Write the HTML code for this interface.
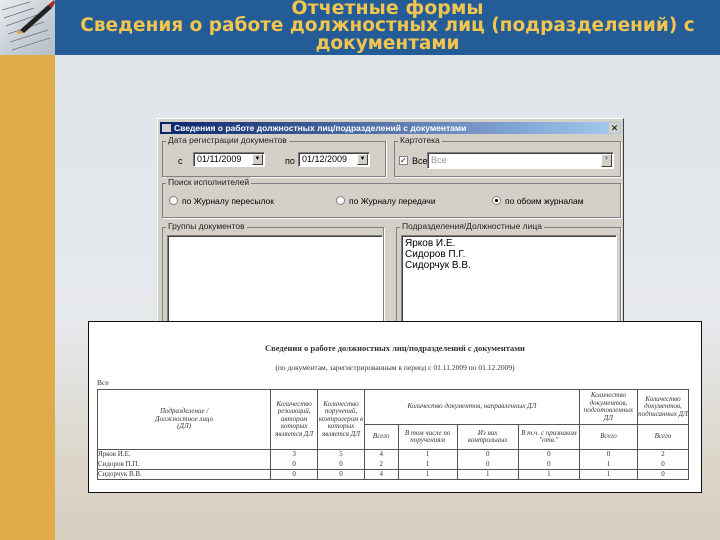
<!DOCTYPE html>
<html><head><meta charset="utf-8"><style>
*{margin:0;padding:0;box-sizing:border-box}
body{width:720px;height:540px;position:relative;overflow:hidden;font-family:"Liberation Sans","DejaVu Sans",sans-serif;
background:linear-gradient(180deg,#dfe4ea 0%,#e6e9ec 60%,#dcd6ca 85%,#d6cfc0 100%)}
.hdr{position:absolute;left:0;top:0;width:720px;height:55px;background:#245c98}
.pic{position:absolute;left:0;top:0;width:55px;height:55px;background:linear-gradient(135deg,#e8ecef 0%,#c9d0d6 50%,#b6bec6 100%);overflow:hidden}
.strip{position:absolute;left:0;top:55px;width:55px;height:485px;background:#e2ab4a}
.t1,.t2{position:absolute;left:55px;width:665px;text-align:center;color:#f2c54e;font-weight:bold;font-family:"DejaVu Sans",sans-serif;white-space:nowrap}
.t1{top:-3px;font-size:19px;line-height:22px}
.t2{top:17px;font-size:18.5px;line-height:18px}
.dlg{position:absolute;left:157px;top:118px;width:467px;height:205px;background:#d4d0c8;border:1px solid #fff;border-right-color:#404040;font-size:9px;color:#000}
.tb{position:absolute;left:2px;top:3px;width:461px;height:12px;background:linear-gradient(90deg,#0a246a,#a6caf0);color:#fff;font-weight:bold;font-size:8.5px;line-height:12px;padding-left:14px}
.tb:before{content:"";position:absolute;left:2px;top:2px;width:9px;height:8px;background:#d4d0c8}
.x{position:absolute;right:1px;top:1px;width:11px;height:10px;background:#d4d0c8;color:#000;font-size:9px;line-height:10px;text-align:center;padding:0}
.gb{position:absolute;border:1px solid #808080;box-shadow:1px 1px 0 #fff}
.gl{position:absolute;top:-7px;left:3px;background:#d4d0c8;padding:0 2px;font-size:8.5px;color:#222}
.in{position:absolute;background:#fff;border:1px solid #808080;border-right-color:#fff;border-bottom-color:#fff;box-shadow:inset 1px 1px 0 #404040}
.dd{position:absolute;right:1px;top:1px;width:11px;height:11px;background:#d4d0c8;border:1px solid #fff;border-right-color:#404040;border-bottom-color:#404040;font-size:6px;text-align:center;line-height:9px}
.rad{position:absolute;font-size:8.5px;white-space:nowrap}
.rad i{display:inline-block;width:9px;height:9px;border-radius:50%;background:#fff;border:1px solid #808080;vertical-align:-1px;margin-right:4px}
.rep{position:absolute;left:88px;top:321px;width:614px;height:172px;background:#fff;border:1px solid #111;font-family:"Liberation Serif",serif;color:#333}
table{position:absolute;left:8px;top:67px;width:592px;border-collapse:collapse;font-size:7px}
td{border:1px solid #555;text-align:center;font-style:italic;padding:0;line-height:7.5px}
tr.d td{font-style:normal;border-top:none;border-bottom:none;height:10px}
tr.d td:first-child{text-align:left}
</style></head><body>
<div class="hdr"></div>
<div class="pic">
<svg width="55" height="55"><g stroke="#6a737c" stroke-width="0.7">
<path d="M2 10 L30 2 M4 18 L34 8 M6 26 L40 14 M8 34 L44 22 M10 42 L48 30 M12 50 L50 38"/></g>
<path d="M20 30 L48 5 L52 8 L24 33 Z" fill="#222"/><path d="M48 5 L54 0 L55 3 L52 8Z" fill="#a03020"/><path d="M20 30 L16 34 L24 33Z" fill="#d0a040"/></svg>
</div>
<div class="strip"></div>
<div class="t1">Отчетные формы</div>
<div class="t2">Сведения о работе должностных лиц (подразделений) с<br>документами</div>

<div class="dlg">
<div class="tb">Сведения о работе должностных лиц/подразделений с документами<div class="x">✕</div></div>
<div class="gb" style="left:4px;top:22px;width:224px;height:36px"><span class="gl">Дата регистрации документов</span>
<span style="position:absolute;left:15px;top:14px">с</span>
<div class="in" style="left:30px;top:10px;width:72px;height:15px;font-size:9px;padding-left:3px;line-height:13px">01/11/2009<div class="dd">▼</div></div>
<span style="position:absolute;left:122px;top:14px">по</span>
<div class="in" style="left:135px;top:10px;width:72px;height:15px;font-size:9px;padding-left:3px;line-height:13px">01/12/2009<div class="dd">▼</div></div>
</div>
<div class="gb" style="left:236px;top:22px;width:227px;height:36px"><span class="gl">Картотека</span>
<div style="position:absolute;left:4px;top:14px;width:9px;height:9px;background:#fff;border:1px solid #808080;font-size:8px;line-height:7px">✓</div>
<span style="position:absolute;left:17px;top:14px">Все</span>
<div class="in" style="left:32px;top:10px;width:187px;height:17px;color:#999;padding-left:3px;line-height:15px;background:#fff">Все<div class="dd" style="height:13px;color:#888">▼</div></div>
</div>
<div class="gb" style="left:4px;top:64px;width:459px;height:35px"><span class="gl">Поиск исполнителей</span>
<div class="rad" style="left:6px;top:12px"><i></i>по Журналу пересылок</div>
<div class="rad" style="left:173px;top:12px"><i></i>по Журналу передачи</div>
<div class="rad" style="left:329px;top:12px"><i style="background:radial-gradient(#000 30%,#fff 36%)"></i>по обоим журналам</div>
</div>
<div class="gb" style="left:4px;top:108px;width:222px;height:100px"><span class="gl">Группы документов</span>
<div class="in" style="left:4px;top:7px;width:216px;height:92px"></div></div>
<div class="gb" style="left:238px;top:108px;width:225px;height:100px"><span class="gl">Подразделения/Должностные лица</span>
<div class="in" style="left:4px;top:7px;width:216px;height:92px;font-size:10px;line-height:11px;padding:2px 3px">Ярков И.Е.<br>Сидоров П.Г.<br>Сидорчук В.В.</div></div>
</div>

<div class="rep">
<div style="position:absolute;left:0;top:21px;width:612px;text-align:center;font-size:8.5px;font-weight:bold">Сведения о работе должностных лиц/подразделений с документами</div>
<div style="position:absolute;left:0;top:41px;width:612px;text-align:center;font-size:7.5px">(по документам, зарегистрированным в период с 01.11.2009 по 01.12.2009)</div>
<div style="position:absolute;left:8px;top:56px;font-size:7.5px">Все</div>
<table>
<tr style="height:35px"><td rowspan="2" style="width:170px">Подразделение /<br>Должностное лицо<br>(ДЛ)</td>
<td rowspan="2" style="width:46px">Количество резолюций, автором которых является ДЛ</td>
<td rowspan="2" style="width:46px">Количество поручений, контролером в которых является ДЛ</td>
<td colspan="4">Количество документов, направленных ДЛ</td>
<td style="width:57px">Количество документов, подготовленных ДЛ</td>
<td style="width:50px">Количество документов, подписанных ДЛ</td></tr>
<tr style="height:25px"><td style="width:33px">Всего</td><td style="width:58px">В том числе по поручениям</td><td style="width:60px">Из них контрольных</td><td style="width:60px">В т.ч. с признаком "отв."</td><td>Всего</td><td>Всего</td></tr>
<tr class="d" style="border-top:1px solid #555"><td>Ярков И.Е.</td><td>3</td><td>5</td><td>4</td><td>1</td><td>0</td><td>0</td><td>0</td><td>2</td></tr>
<tr class="d"><td>Сидоров П.П.</td><td>0</td><td>0</td><td>2</td><td>1</td><td>0</td><td>0</td><td>1</td><td>0</td></tr>
<tr class="d" style="border-top:1px solid #555;border-bottom:1px solid #555"><td>Сидорчук В.В.</td><td>0</td><td>0</td><td>4</td><td>1</td><td>1</td><td>1</td><td>1</td><td>0</td></tr>
</table>
</div>
</body></html>
